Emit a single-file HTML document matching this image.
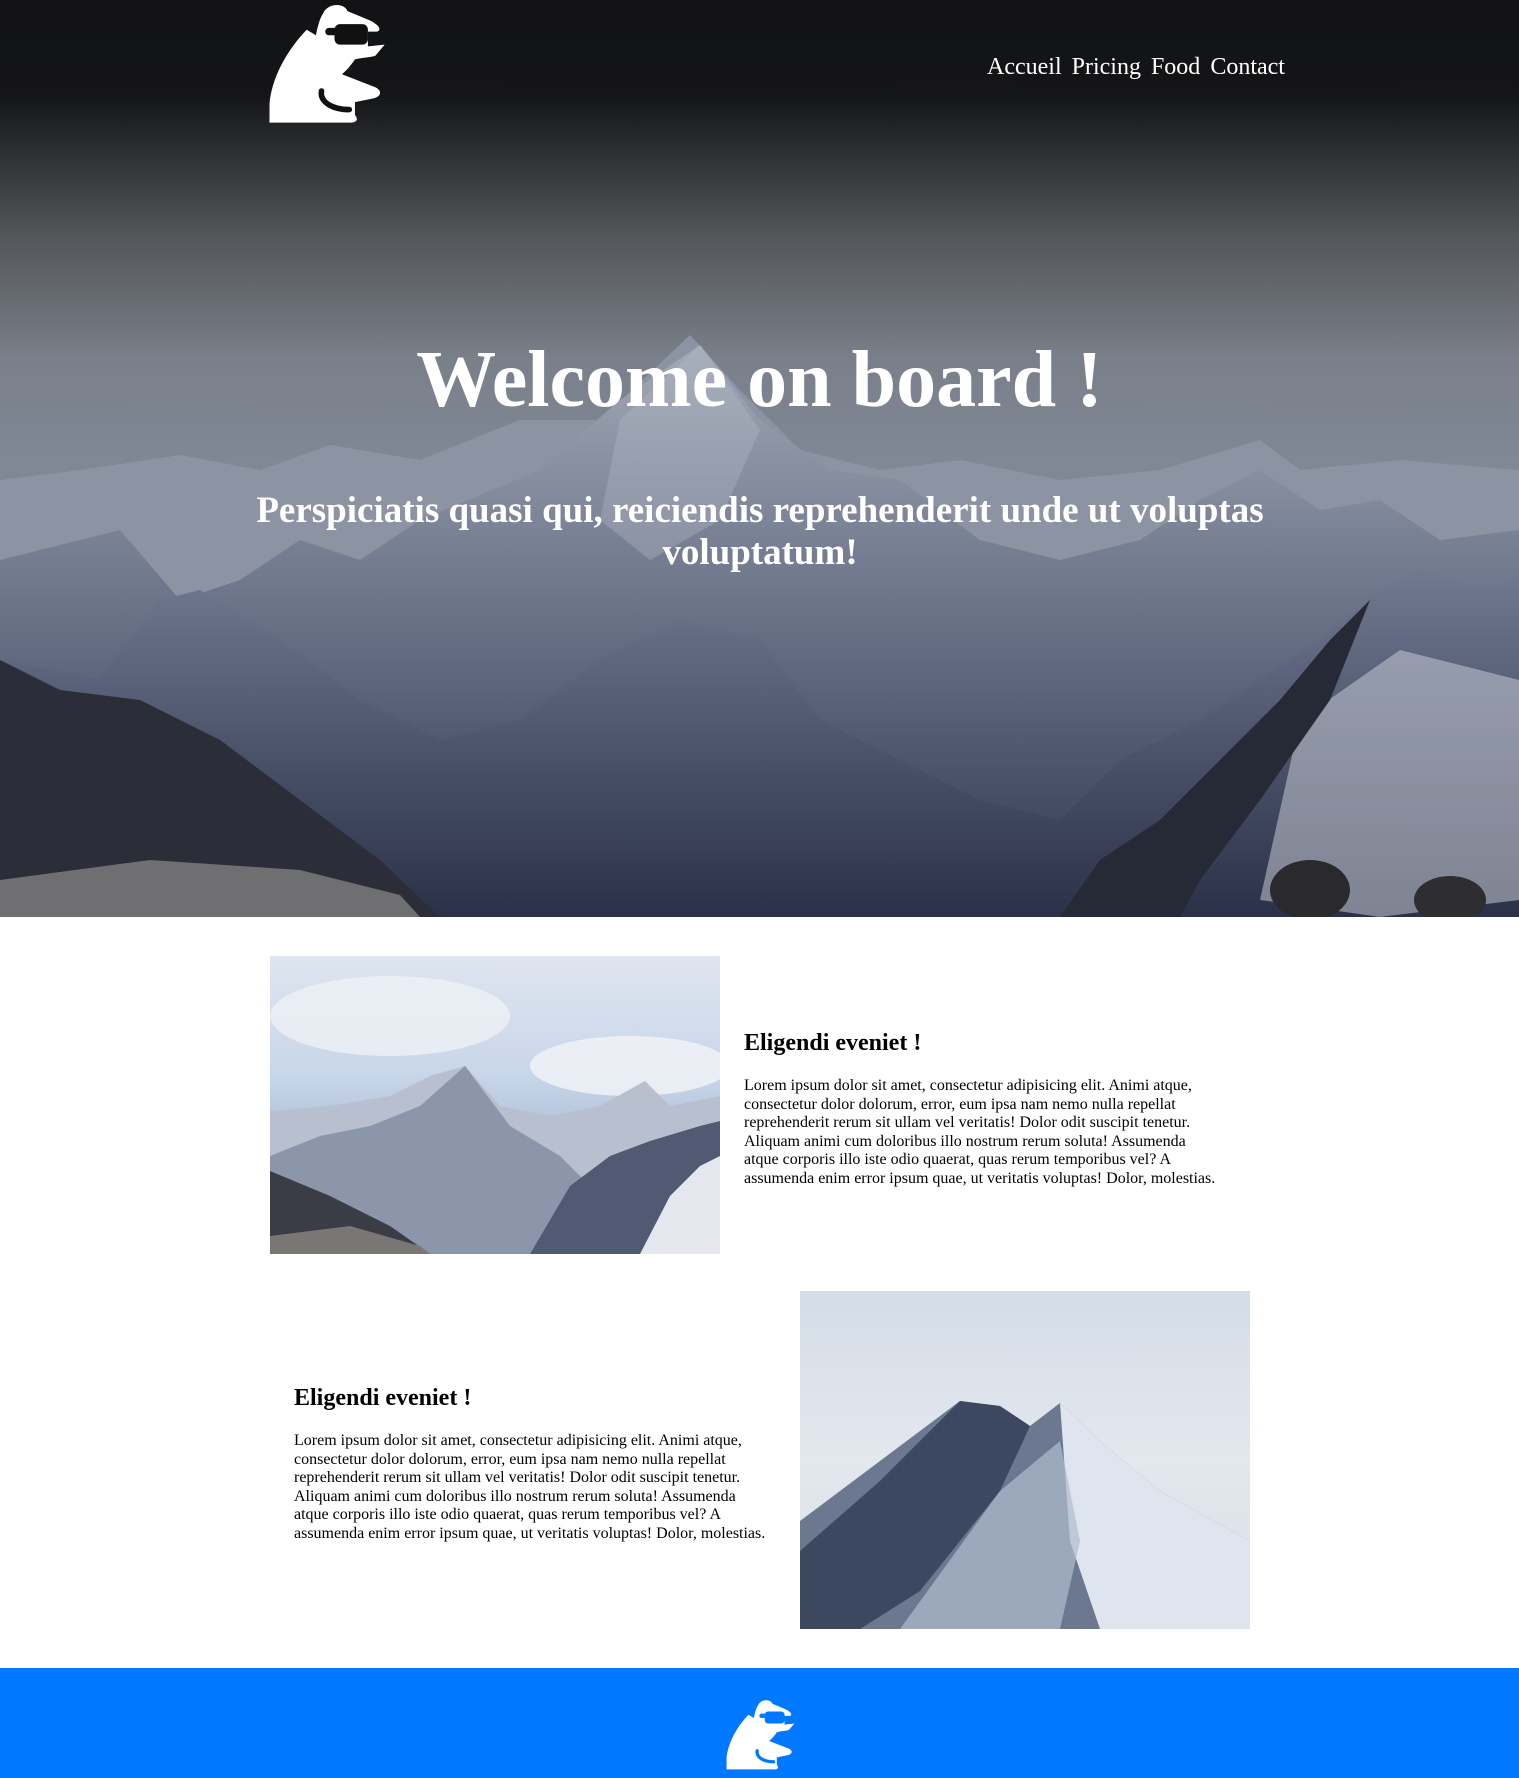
<!DOCTYPE html>
<html><head><meta charset="utf-8"><style>
*{margin:0;padding:0;box-sizing:border-box}
body{width:1519px;height:1778px;overflow:hidden;background:#fff;font-family:"Liberation Serif",serif;position:relative}
.hero{position:absolute;left:0;top:0;width:1519px;height:917px;overflow:hidden;background:linear-gradient(#111214 0px,#141517 95px,#26272a 135px,#55575b 240px,#7a808a 360px,#808896 470px,#7a8294 600px)}
.hero svg.bg{position:absolute;left:0;top:0}
.logo{position:absolute;left:258px;top:0}
nav{position:absolute;left:987px;top:54px;color:#fff;font-size:24px;white-space:nowrap}
nav span{margin-right:10px}
h1{position:absolute;left:0;width:1519px;top:335px;text-align:center;color:#fff;font-size:80px;font-weight:bold}
.sub{position:absolute;left:200px;width:1120px;top:490px;text-align:center;color:#fff;font-size:37px;font-weight:bold;line-height:42px}
.txt{position:absolute;width:478px}
.txt h2{font-size:24px;font-weight:bold;margin-bottom:20px}
.txt p{font-size:16px;line-height:18.5px}
.img{position:absolute;overflow:hidden}
footer{position:absolute;left:0;top:1668px;width:1519px;height:110px;background:#0078ff}
</style></head><body>
<div class="hero">
<svg class="bg" width="1519" height="917" viewBox="0 0 1519 917">
<defs>
<linearGradient id="m1" x1="0" y1="0" x2="0" y2="1"><stop offset="0" stop-color="#a2a9b6"/><stop offset="0.45" stop-color="#6b7489"/><stop offset="1" stop-color="#303850"/></linearGradient>
<linearGradient id="m2" x1="0" y1="0" x2="0" y2="1"><stop offset="0" stop-color="#6f7990"/><stop offset="1" stop-color="#2a3148"/></linearGradient>
</defs>
<polygon fill="#8c93a2" points="0,480 80,470 180,455 260,470 330,445 420,460 520,420 600,420 690,335 740,390 800,450 880,470 960,460 1060,480 1160,470 1260,440 1300,470 1400,460 1519,470 1519,917 0,917"/>
<polygon fill="url(#m1)" points="0,560 120,530 180,600 240,580 300,540 360,560 420,520 540,470 620,400 700,345 760,420 830,470 900,480 980,540 1060,560 1140,540 1200,500 1260,470 1320,510 1380,500 1440,540 1519,530 1519,917 0,917"/>
<polygon fill="#b4bbc8" opacity="0.35" points="620,420 700,345 760,430 720,520 650,560 600,520"/>
<polygon fill="url(#m2)" points="0,660 100,680 160,600 200,590 280,640 360,700 440,740 520,720 600,660 680,620 760,640 820,720 900,760 980,800 1060,820 1120,760 1200,720 1260,680 1320,640 1380,590 1420,570 1480,590 1519,580 1519,917 0,917"/>
<polygon fill="#c4c8d2" opacity="0.55" points="1300,720 1400,650 1519,680 1519,900 1380,917 1260,900"/>
<polygon fill="#2b2e38" points="0,660 60,690 140,700 220,740 300,800 380,860 440,917 0,917"/>
<polygon fill="#262a36" points="1060,917 1100,860 1160,820 1220,760 1280,700 1330,640 1370,600 1330,700 1260,800 1200,880 1180,917"/>
<polygon fill="#6f6f72" points="0,880 150,860 300,870 400,895 420,917 0,917"/>
<ellipse cx="1310" cy="890" rx="40" ry="30" fill="#2a2a2e"/>
<ellipse cx="1450" cy="900" rx="36" ry="24" fill="#2e2e32"/>
</svg>
<svg class="logo" width="140" height="130" viewBox="0 0 150 140">
<path fill="#fff" d="M12,130 L12,112 C14,85 30,55 52,32 L62,38 C64,28 66,20 70,14 C74,4 92,2 96,12 L120,22 C130,27 133,32 128,34 L118,34 L118,50 L136,48 L126,60 C120,62 110,62 104,64 C100,70 95,76 90,80 L126,94 C134,98 132,104 124,106 L104,110 L104,124 C108,128 106,132 100,132 L12,132 Z"/>
<rect x="82" y="26" width="36" height="22" rx="6" fill="#111"/>
<rect x="72" y="30" width="14" height="8" rx="4" fill="#111"/>
<path d="M68,98 C66,110 80,118 98,118" stroke="#111" stroke-width="6" fill="none" stroke-linecap="round"/>
</svg>
<nav><span>Accueil</span><span>Pricing</span><span>Food</span><span>Contact</span></nav>
<h1>Welcome on board !</h1>
<div class="sub">Perspiciatis quasi qui, reiciendis reprehenderit unde ut voluptas voluptatum!</div>
</div>

<div class="img" style="left:270px;top:956px;width:450px;height:298px;background:linear-gradient(#dfe5ef,#c8d6ea 40%,#b7c6dd 55%)">
<svg width="450" height="298" viewBox="0 0 450 298">
<ellipse cx="120" cy="60" rx="120" ry="40" fill="#eef1f6" opacity="0.8"/>
<ellipse cx="360" cy="110" rx="100" ry="30" fill="#f2f4f8" opacity="0.8"/>
<polygon fill="#b8c0cf" points="0,155 60,150 120,140 160,120 195,110 230,150 280,160 330,150 375,125 400,150 450,140 450,298 0,298"/>
<polygon fill="#8c96ab" points="0,200 50,180 100,170 150,150 195,110 240,170 290,200 320,230 300,298 0,298"/>
<polygon fill="#505a73" points="260,298 300,230 340,200 380,185 430,170 450,165 450,298"/>
<polygon fill="#e4e8ee" points="370,298 400,240 430,210 450,200 450,298"/>
<polygon fill="#3a3c46" points="0,215 60,240 120,270 160,298 0,298"/>
<polygon fill="#7a7674" points="0,280 80,270 150,290 160,298 0,298"/>
</svg></div>
<div class="txt" style="left:744px;top:1030px"><h2>Eligendi eveniet !</h2><p>Lorem ipsum dolor sit amet, consectetur adipisicing elit. Animi atque, consectetur dolor dolorum, error, eum ipsa nam nemo nulla repellat reprehenderit rerum sit ullam vel veritatis! Dolor odit suscipit tenetur. Aliquam animi cum doloribus illo nostrum rerum soluta! Assumenda atque corporis illo iste odio quaerat, quas rerum temporibus vel? A assumenda enim error ipsum quae, ut veritatis voluptas! Dolor, molestias.</p></div>

<div class="txt" style="left:294px;top:1385px"><h2>Eligendi eveniet !</h2><p>Lorem ipsum dolor sit amet, consectetur adipisicing elit. Animi atque, consectetur dolor dolorum, error, eum ipsa nam nemo nulla repellat reprehenderit rerum sit ullam vel veritatis! Dolor odit suscipit tenetur. Aliquam animi cum doloribus illo nostrum rerum soluta! Assumenda atque corporis illo iste odio quaerat, quas rerum temporibus vel? A assumenda enim error ipsum quae, ut veritatis voluptas! Dolor, molestias.</p></div>
<div class="img" style="left:800px;top:1291px;width:450px;height:338px;background:linear-gradient(#d4dce6,#e3e8ee 50%,#d8dee6)">
<svg width="450" height="338" viewBox="0 0 450 338">
<polygon fill="#6b7890" points="0,230 80,170 160,110 200,115 230,135 260,112 300,150 360,200 450,250 450,338 0,338"/>
<polygon fill="#dfe5ee" points="260,112 300,150 360,200 450,250 450,338 300,338 270,250"/>
<polygon fill="#3c4860" points="160,110 200,115 230,135 200,200 120,300 60,338 0,338 0,260 80,190"/>
<polygon fill="#b0bccd" opacity="0.7" points="100,338 200,200 260,150 280,250 260,338"/>
</svg></div>

<footer>
<svg style="position:absolute;left:720px;top:25px" width="82" height="85" viewBox="0 0 150 140">
<path fill="#fff" d="M12,130 L12,112 C14,85 30,55 52,32 L62,38 C64,28 66,20 70,14 C74,4 92,2 96,12 L120,22 C130,27 133,32 128,34 L118,34 L118,50 L136,48 L126,60 C120,62 110,62 104,64 C100,70 95,76 90,80 L126,94 C134,98 132,104 124,106 L104,110 L104,124 C108,128 106,132 100,132 L12,132 Z"/>
<rect x="82" y="26" width="36" height="22" rx="6" fill="#0078ff"/>
<rect x="72" y="30" width="14" height="8" rx="4" fill="#0078ff"/>
<path d="M68,98 C66,110 80,118 98,118" stroke="#0078ff" stroke-width="6" fill="none" stroke-linecap="round"/>
</svg>
</footer>
</body></html>
